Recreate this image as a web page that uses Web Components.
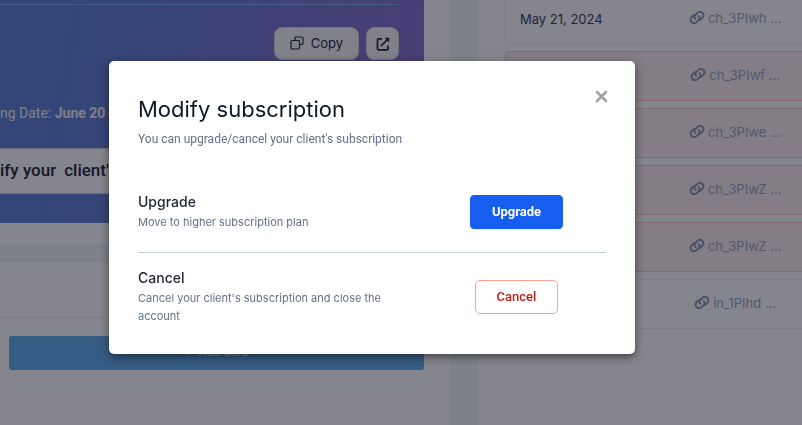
<!DOCTYPE html>
<html lang="en">
<head>
<meta charset="utf-8">
<title>Modify subscription</title>
<style>
html, body { height: 100%; margin: 0; }
body { overflow: hidden; background: #fff; font: 13px/18px Inter, "Noto Sans", sans-serif; color: #101828; }
</style>
</head>
<body>
<subscription-page></subscription-page>
<script>
function define(name, html) {
  const tpl = document.createElement('template');
  tpl.innerHTML = '<style>*{box-sizing:border-box}</style>' + html;
  customElements.define(name, class extends HTMLElement {
    constructor() {
      super();
      this.attachShadow({ mode: 'open' }).append(tpl.content.cloneNode(true));
    }
  });
}

define('ui-button', `
<style>
:host { display: inline-flex; }
button { display: flex; width: 100%; height: 34px; align-items: center; justify-content: center; gap: 7px; padding: 0 15px;
  border: 1px solid #d0d5dd; border-radius: 8px; background: #f7f7f9; color: #1d2433; font: inherit; font-weight: 400; cursor: pointer; }
:host([kind=tool]) button { height: 33px; padding-bottom: 2px; }
:host([kind=icon]) button { width: 33px; height: 33px; padding: 0; }
:host([kind=primary]) button { padding: 0 21px; border-color: #155eef; border-radius: 4px; background: #155eef; color: #fff; font: 700 13px/18px Roboto, sans-serif; box-shadow: 0 1px 2px #1018280d; }
:host([kind=danger]) button { padding: 0 21px; border-color: #fda29b; border-radius: 5px; background: #fff; color: #b42318; font: 500 13px/18px Roboto, sans-serif; box-shadow: 0 1px 2px #1018280d; }
:host([kind=add]) button { padding-bottom: 2px; border: 0; border-radius: 3px; background: #62acea; color: #fff; font-weight: 600; font-size: 11px; gap: 6px; }
</style>
<button type="button"><slot></slot></button>`);

define('billing-card', `
<style>
:host { display: block; height: 223px; padding: 4px 25px 0 0; background: linear-gradient(100deg, #5a80d3 15%, #8870cf 95%); color: #fff; }
hr { margin: 0; border: 0; border-top: 1px solid #76b2e6; }
.tools { display: flex; justify-content: flex-end; gap: 7px; padding-top: 22px; color: #1d2433; }
p { margin: 0; padding: 43px 0 0; font: 14px/20px Roboto, sans-serif; color: #f2f2f2; }
.modify { display: flex; gap: 8px; align-items: center; width: 100%; height: 46px; margin-top: 25px; padding: 0 0 2px; border: 1px solid #d0d5dd; border-left: 0; border-radius: 0 8px 8px 0; background: #fff; color: #1d2433; font: 500 17px/24px Roboto, sans-serif; }
</style>
<hr>
<div class="tools">
  <ui-button kind="tool"><svg width="14" height="14" viewBox="0 0 14 14" fill="none" stroke="currentColor" stroke-width="1.200"><path d="M5 4V2a1 1 0 0 1 1-1h6a1 1 0 0 1 1 1v5.500a1 1 0 0 1-1 1h-2"/><rect x="1" y="4.500" width="8.500" height="8.500" rx="1"/></svg><span>Copy</span></ui-button>
  <ui-button kind="icon"><svg role="img" aria-label="Open" width="14" height="14" viewBox="0 0 14 14" fill="none" stroke="currentColor" stroke-width="1.700"><path d="M6 1.800H2.500a1 1 0 0 0-1 1v9a1 1 0 0 0 1 1h8.500a1 1 0 0 0 1-1V8.500M5 9l6.500-6.500"/><path d="M8.500.8h4.700v4.700z" fill="currentColor" stroke="none"/></svg></ui-button>
</div>
<p>ng Date: <b>June 20</b></p>
<button class="modify" type="button"><span>ify your</span><span>client'</span></button>`);

define('payment-link', `
<style>
:host { display: inline-block; }
a { display: inline-flex; align-items: center; gap: 3px; color: #98a6bd; text-decoration: none; white-space: nowrap; }
</style>
<a href="#"><svg width="16" height="13" viewBox="0 0 16 13" fill="none" stroke="#8795ae" stroke-width="1.900" stroke-linecap="round"><path d="M6.300 7.800C5 6.600 5.300 4.900 6.300 3.900L8.400 1.900c1.400-1.300 3.500-1.300 4.800-.1 1.800 1.600 1.500 3.700.2 4.900L12 8.200c-.9.800-1.700 1-2.500.9"/><path d="M9.700 5.200c1.300 1.200 1 2.900 0 3.900l-2.100 2c-1.400 1.300-3.500 1.300-4.800.1C1 9.600 1.300 7.500 2.600 6.300L4 4.800c.9-.8 1.700-1 2.500-.9"/></svg><slot></slot></a>`);

const payments = [['May 21, 2024', 'ch_3PIwh ...', ''], ['', 'ch_3PIwf ...', 'bad'], ['', 'ch_3PIwe ...', 'bad'], ['', 'ch_3PIwZ ...', 'bad'], ['', 'ch_3PIwZ ...', 'bad'], ['', 'in_1PIhd ...', '']];
define('payment-table', `
<style>
:host { display: block; }
table { width: 100%; margin-top: -13px; border-collapse: separate; border-spacing: 0 7px; table-layout: fixed; }
td { height: 50px; padding: 0 0 1px; border: solid #eaecf0; border-width: 1px 0; text-align: center; }
td:first-child { width: 55%; padding-left: 14px; border-left-width: 1px; border-radius: 4px 0 0 4px; text-align: left; color: #344054; }
.bad td { border-color: #f8c6ca; background: #feeff1; }
</style>
<table><tbody>${payments.map(([d, id, c]) => `<tr class="${c}"><td>${d}</td><td><payment-link>${id}</payment-link></td></tr>`).join('')}</tbody></table>`);

define('card-panel', `
<style>
:host { display: block; }
.gap { height: 18px; margin-top: 21px; margin-right: -27px; background: #f1f7f8; }
.head { height: 56px; border-bottom: 1px solid #e6e8ec; }
.body { padding: 18px 0 0 9px; }
ui-button { display: flex; }
</style>
<div class="gap"></div><div class="head"></div>
<div class="body"><ui-button kind="add"><span>+</span><span>Add Card</span></ui-button></div>`);

define('plan-option', `
<style>
:host { display: grid; grid-template-columns: minmax(0, 289fr) minmax(0, 179fr); align-items: center; }
h3 { margin: 0; font-size: 14px; line-height: 20px; font-weight: 500; color: #1d2433; }
p { margin: 1px 0 0; padding-right: 32px; font-size: 11px; line-height: 18px; color: #667085; }
.action { display: flex; justify-content: center; }
</style>
<div><h3><slot name="title"></slot></h3><p><slot></slot></p></div>
<div class="action"><slot name="action"></slot></div>`);

define('modal-dialog', `
<style>
:host { display: block; position: relative; padding: 32px 29px 29px; border-radius: 5px; background: #fff; box-shadow: 0 3px 9px #00000080; }
h2 { margin: 0; font-size: 22px; line-height: 32px; font-weight: 400; color: #101828; }
.sub { margin: 5px 0 44px; font: 12px/18px Roboto, sans-serif; color: #667085; }
.close { position: absolute; top: 25px; right: 23px; display: grid; place-items: center; width: 21px; height: 21px; padding: 0; border: 0; background: none; color: #a3a3a3; }
</style>
<h2><slot name="heading"></slot></h2>
<p class="sub"><slot name="sub"></slot></p>
<slot></slot>
<button class="close" type="button" aria-label="Close"><svg width="13" height="13" viewBox="0 0 13 13" stroke="currentColor" stroke-width="2.600" stroke-linecap="round"><path d="M2 2l9 9M11 2l-9 9"/></svg></button>`);

define('subscription-page', `
<style>
:host { display: grid; grid-template-columns: minmax(0, 451fr) 27px minmax(0, 324fr); height: 100%; overflow: hidden; background: #fff; }
.left { padding-right: 27px; }
.gutter { background: #f1f7f8; }
.right { padding-left: 27px; }
.overlay { position: fixed; inset: 0; padding: 61px 167px 0 109px; background: rgba(12, 12, 28, .5); }
hr { margin: 21px 0 15px; border: 0; border-top: 1px solid #cdd2e0; }
</style>
<div class="left"><billing-card></billing-card><card-panel></card-panel></div>
<div class="gutter"></div>
<div class="right"><payment-table></payment-table></div>
<div class="overlay">
  <modal-dialog role="dialog" aria-label="Modify subscription">
    <span slot="heading">Modify subscription</span>
    <span slot="sub">You can upgrade/cancel your client's subscription</span>
    <plan-option><span slot="title">Upgrade</span>Move to higher subscription plan<ui-button slot="action" kind="primary">Upgrade</ui-button></plan-option>
    <hr>
    <plan-option><span slot="title">Cancel</span>Cancel your client's subscription and close the account<ui-button slot="action" kind="danger">Cancel</ui-button></plan-option>
  </modal-dialog>
</div>`);
</script>
</body>
</html>
